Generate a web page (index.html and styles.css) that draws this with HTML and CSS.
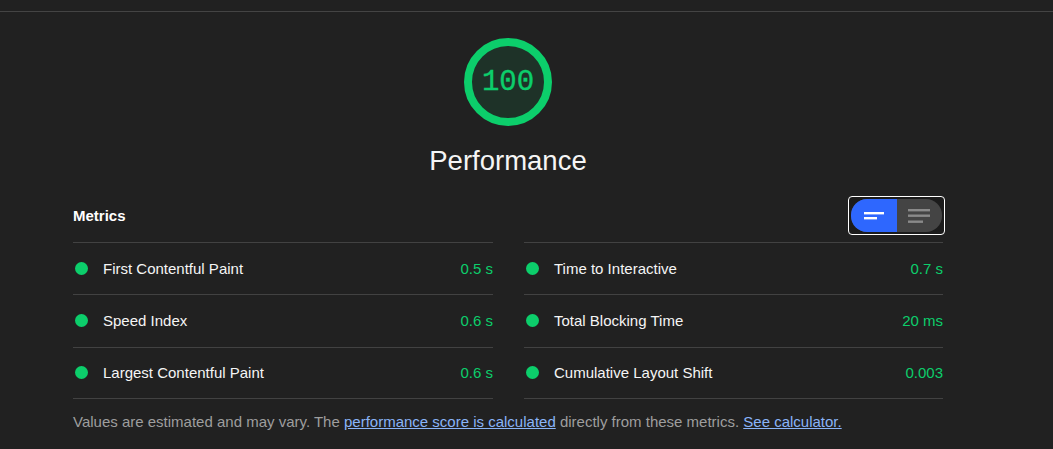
FILE: index.html
```html
<!DOCTYPE html>
<html lang="en">
<head>
<meta charset="utf-8">
<title>Performance</title>
<link rel="stylesheet" href="styles.css">
</head>
<body>
<div class="top-rule"></div>
<div class="report">
  <div class="gauge-wrap">
    <div class="gauge">
      <svg class="gauge-svg" width="88" height="88" viewBox="0 0 88 88">
        <circle cx="44" cy="44" r="40" fill="rgba(12,206,107,0.1)" stroke="#0cce6b" stroke-width="8"/>
      </svg>
      <span class="gauge-score">100</span>
    </div>
    <div class="gauge-title">Performance</div>
  </div>

  <div class="metrics-header">
    <div class="metrics-title">Metrics</div>
    <div class="toggle">
      <div class="toggle-pill">
        <div class="toggle-half active">
          <svg width="22" height="10" viewBox="0 0 22 10">
            <rect x="1" y="1" width="20" height="2.4" fill="#fff"/>
            <rect x="1" y="6" width="13" height="2.4" fill="#fff"/>
          </svg>
        </div>
        <div class="toggle-half">
          <svg width="24" height="16" viewBox="0 0 24 16">
            <rect x="1" y="1" width="22" height="2.4" fill="#8a8a8a"/>
            <rect x="1" y="6.5" width="22" height="2.4" fill="#8a8a8a"/>
            <rect x="1" y="12.5" width="15" height="2.4" fill="#8a8a8a"/>
          </svg>
        </div>
      </div>
    </div>
  </div>

  <div class="metrics-grid">
    <div class="metric"><span class="dot"></span><span class="label">First Contentful Paint</span><span class="value">0.5 s</span></div>
    <div class="metric"><span class="dot"></span><span class="label">Time to Interactive</span><span class="value">0.7 s</span></div>
    <div class="metric mid"><span class="dot"></span><span class="label">Speed Index</span><span class="value">0.6 s</span></div>
    <div class="metric mid"><span class="dot"></span><span class="label">Total Blocking Time</span><span class="value">20 ms</span></div>
    <div class="metric last"><span class="dot"></span><span class="label">Largest Contentful Paint</span><span class="value">0.6 s</span></div>
    <div class="metric last"><span class="dot"></span><span class="label">Cumulative Layout Shift</span><span class="value">0.003</span></div>
  </div>

  <p class="disclaimer">Values are estimated and may vary. The <a href="#">performance score is calculated</a> directly from these metrics. <a href="#">See calculator.</a></p>
</div>
</body>
</html>
```

FILE: styles.css
```css
html, body {
  margin: 0;
  padding: 0;
  background: #212121;
  color: #f5f5f5;
  font-family: "Liberation Sans", Arial, sans-serif;
  font-size: 15px;
}

.top-rule {
  height: 11px;
  border-bottom: 1px solid #444444;
}

.report {
  margin-left: 73px;
  width: 870px;
}

.gauge-wrap {
  display: flex;
  flex-direction: column;
  align-items: center;
  margin-top: 26px;
}

.gauge {
  position: relative;
  width: 88px;
  height: 88px;
}

.gauge-svg {
  display: block;
}

.gauge-score {
  position: absolute;
  inset: 0;
  display: flex;
  align-items: center;
  justify-content: center;
  font-family: "Liberation Mono", "DejaVu Sans Mono", monospace;
  font-size: 29px;
  color: #0cce6b;
  -webkit-text-stroke: 0.4px #0cce6b;
}

.gauge-title {
  margin-top: 19px;
  font-size: 27.5px;
  line-height: 32px;
  color: #f5f5f5;
}

.metrics-header {
  display: flex;
  align-items: center;
  justify-content: space-between;
  margin-top: 19px;
  margin-bottom: 7px;
  height: 39px;
}

.metrics-title {
  font-weight: bold;
  font-size: 15px;
  color: #ffffff;
}

.toggle {
  margin-right: -2px;
  border: 1px solid #ffffff;
  border-radius: 4px;
  padding: 2px;
  background: #1b1b1b;
}

.toggle-pill {
  display: flex;
  width: 91px;
  height: 33px;
  border-radius: 16px;
  overflow: hidden;
  background: #444444;
}

.toggle-half {
  flex: 1;
  display: flex;
  align-items: center;
  justify-content: center;
}

.toggle-half.active {
  background: #2e67fe;
}

.toggle-half.active svg {
  margin-top: 1px;
}

.toggle-half svg {
  display: block;
}

.metrics-grid {
  display: grid;
  grid-template-columns: 420px 419px;
  column-gap: 31px;
}

.metric {
  display: flex;
  align-items: center;
  height: 52px;
  box-sizing: border-box;
  border-top: 1px solid #424242;
}

.metric.mid {
  height: 53px;
  padding-bottom: 1px;
}

.metric.last {
  border-bottom: 1px solid #424242;
  height: 52px;
  padding-bottom: 1px;
}

.dot {
  width: 13px;
  height: 13px;
  border-radius: 50%;
  background: #0cce6b;
  margin-left: 2px;
  margin-right: 15px;
  flex: none;
}

.label {
  flex: 1;
  color: #f5f5f5;
}

.value {
  color: #0cce6b;
}

.disclaimer {
  margin: 13px 0 0;
  line-height: 20px;
  color: #9e9e9e;
}

.disclaimer a {
  color: #8ab4f8;
  text-decoration: underline;
}
```
